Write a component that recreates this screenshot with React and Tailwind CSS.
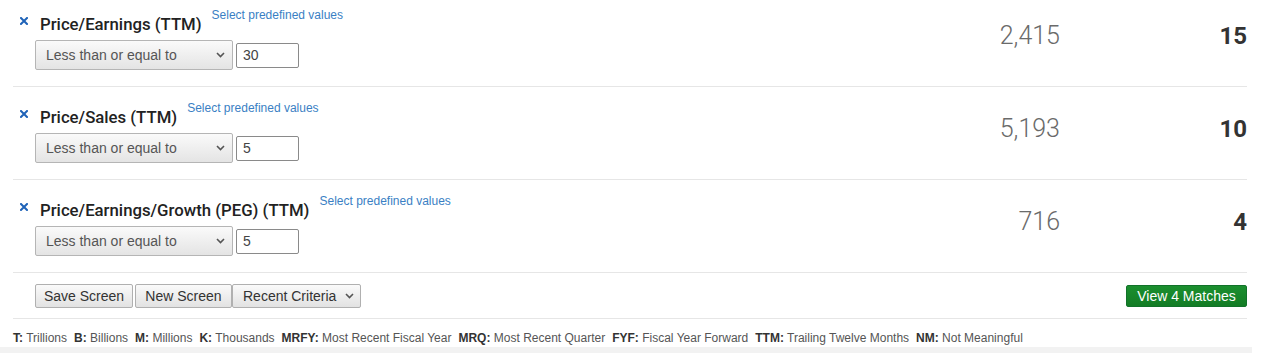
import React from "react";

const rows = [
  { title: "Price/Earnings (TTM)", value: "30", count: "2,415", matches: "15", first: true },
  { title: "Price/Sales (TTM)", value: "5", count: "5,193", matches: "10" },
  { title: "Price/Earnings/Growth (PEG) (TTM)", value: "5", count: "716", matches: "4" },
];

function Chevron({ className = "" }) {
  return (
    <svg width="9" height="6" viewBox="0 0 9 6" className={className}>
      <polyline points="1,1 4.5,4.5 8,1" fill="none" stroke="#555" strokeWidth="1.6" />
    </svg>
  );
}

function XIcon() {
  return (
    <svg width="8" height="8" viewBox="0 0 8 8" className="mt-[9px] ml-[7px] shrink-0">
      <path d="M1 1 L7 7 M7 1 L1 7" stroke="#1f63b8" strokeWidth="2" strokeLinecap="square" />
    </svg>
  );
}

function Row({ r }) {
  return (
    <div className={`flex border-b border-[#e6e6e6] ${r.first ? "pt-[8px]" : "pt-[14px]"} pb-[16px]`}>
      <div className="flex flex-col">
        <div className="flex items-start">
          <XIcon />
          <div className="ml-[12px] mt-[6px] text-[16.75px] leading-[20px] font-medium text-[#222] font-['Roboto',sans-serif]">
            {r.title}
          </div>
          <a className="ml-[10px] text-[12px] leading-[14px] text-[#3a7fc4] font-['Liberation_Sans',Arial,sans-serif] cursor-pointer">
            Select predefined values
          </a>
        </div>
        <div className="flex items-center ml-[22px] mt-[6px]">
          <div className="flex items-center justify-between w-[198px] h-[30px] border border-[#b5b5b5] rounded-[2px] bg-gradient-to-b from-[#fafafa] to-[#e4e4e4] pl-[10px] pr-[7px] text-[14px] text-[#555] font-['Liberation_Sans',Arial,sans-serif]">
            <span>Less than or equal to</span>
            <Chevron />
          </div>
          <div className="ml-[3px] w-[63px] h-[25px] border border-[#8a8a8a] rounded-[2px] bg-white flex items-center pl-[6px] text-[14px] text-[#444] font-['Liberation_Sans',Arial,sans-serif]">
            {r.value}
          </div>
        </div>
      </div>
      <div className="flex-1" />
      <div className="mt-[14px] w-[200px] text-right text-[25px] leading-[28px] font-light text-[#6a6a6a] font-['Roboto',sans-serif]">
        {r.count}
      </div>
      <div className="mt-[14px] w-[187px] text-right text-[24px] leading-[28px] font-bold text-[#333] font-['Roboto',sans-serif]">
        {r.matches}
      </div>
    </div>
  );
}

const legend = [
  ["T:", "Trillions"],
  ["B:", "Billions"],
  ["M:", "Millions"],
  ["K:", "Thousands"],
  ["MRFY:", "Most Recent Fiscal Year"],
  ["MRQ:", "Most Recent Quarter"],
  ["FYF:", "Fiscal Year Forward"],
  ["TTM:", "Trailing Twelve Months"],
  ["NM:", "Not Meaningful"],
];

export default function App() {
  return (
    <div className="w-[1271px] h-[354px] bg-white overflow-hidden font-['Liberation_Sans',Arial,sans-serif]">
      <div className="ml-[13px] w-[1234px]">
        {rows.map((r) => (
          <Row key={r.title} r={r} />
        ))}
        <div className="flex items-center border-b border-[#e6e6e6] pt-[11px] pb-[10px]">
          <div className="flex items-center ml-[22px] text-[14px] text-[#333]">
            <button className="h-[24px] w-[98px] border border-[#b0b0b0] rounded-[2px] bg-gradient-to-b from-[#fafafa] to-[#e2e2e2]">
              Save Screen
            </button>
            <button className="ml-[2px] h-[24px] w-[97px] border border-[#b0b0b0] rounded-[2px] bg-gradient-to-b from-[#fafafa] to-[#e2e2e2]">
              New Screen
            </button>
            <div className="h-[24px] w-[129px] border border-[#b0b0b0] rounded-[2px] bg-gradient-to-b from-[#fafafa] to-[#e2e2e2] flex items-center justify-between pl-[10px] pr-[6px]">
              <span>Recent Criteria</span>
              <Chevron />
            </div>
          </div>
          <div className="flex-1" />
          <button className="h-[22px] w-[121px] rounded-[2px] bg-gradient-to-b from-[#1b8f2f] to-[#137c25] border border-[#12722a] text-white text-[14px]">
            View 4 Matches
          </button>
        </div>
        <div className="h-[28px] pt-[12px] text-[12px] leading-[14px] text-[#555] flex gap-[7px] whitespace-nowrap">
          {legend.map(([k, v]) => (
            <span key={k}>
              <b className="text-[#333]">{k}</b> {v}
            </span>
          ))}
        </div>
      </div>
      <div className="w-[1252px] h-[6px] bg-[#f2f2f2]" />
    </div>
  );
}
